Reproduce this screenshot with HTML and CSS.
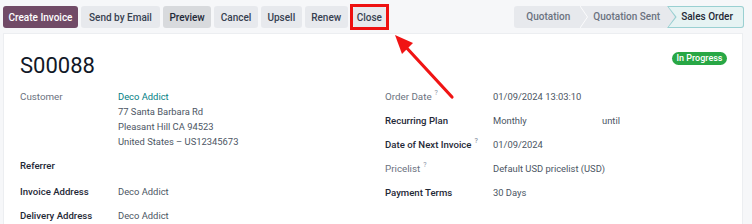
FILE: index.html
```html
<!DOCTYPE html>
<html>
<head>
<meta charset="utf-8">
<link rel="stylesheet" href="styles.css">
</head>
<body>
<div class="page">
  <div class="cp">
    <div class="actions">
      <button class="btn primary">Create Invoice</button>
      <button class="btn wide">Send by Email</button>
      <button class="btn dark">Preview</button>
      <button class="btn">Cancel</button>
      <button class="btn">Upsell</button>
      <button class="btn">Renew</button>
      <span class="hl"><button class="btn">Close</button></span>
    </div>
    <div class="status">
      <span class="st first">Quotation</span>
      <svg class="sep" width="8" height="22" viewBox="0 0 8 22"><polyline points="0,0 7.5,11 0,22" fill="none" stroke="#fbfbfc" stroke-width="1"/></svg>
      <span class="st second">Quotation Sent</span>
      <span class="st active"><span class="in">Sales Order</span></span>
    </div>
  </div>
  <div class="sheet">
    <div class="head">
      <h1 class="title">S00088</h1>
      <span class="badge">In Progress</span>
    </div>
    <div class="groups">
      <div class="group">
        <div class="row">
          <div class="lbl muted">Customer</div>
          <div class="val">
            <div class="link">Deco Addict</div>
            <div>77 Santa Barbara Rd</div>
            <div>Pleasant Hill CA 94523</div>
            <div>United States – US12345673</div>
          </div>
        </div>
        <div class="row ref">
          <div class="lbl">Referrer</div>
          <div class="val"></div>
        </div>
        <div class="row">
          <div class="lbl">Invoice Address</div>
          <div class="val">Deco Addict</div>
        </div>
        <div class="row">
          <div class="lbl">Delivery Address</div>
          <div class="val">Deco Addict</div>
        </div>
      </div>
      <div class="group right">
        <div class="row">
          <div class="lbl muted">Order Date<sup>?</sup></div>
          <div class="val">01/09/2024 13:03:10</div>
        </div>
        <div class="row">
          <div class="lbl">Recurring Plan</div>
          <div class="val split"><span class="plan">Monthly</span><span>until</span></div>
        </div>
        <div class="row">
          <div class="lbl">Date of Next Invoice<sup>?</sup></div>
          <div class="val">01/09/2024</div>
        </div>
        <div class="row">
          <div class="lbl muted">Pricelist<sup>?</sup></div>
          <div class="val">Default USD pricelist (USD)</div>
        </div>
        <div class="row">
          <div class="lbl">Payment Terms</div>
          <div class="val">30 Days</div>
        </div>
      </div>
    </div>
  </div>
  <svg class="arrow" width="752" height="224" viewBox="0 0 752 224">
    <line x1="452" y1="97" x2="404" y2="45" stroke="#f01414" stroke-width="3.2" stroke-linecap="round"/>
    <polygon points="395,35 413,43 402,54" fill="#f01414"/>
  </svg>
</div>
</body>
</html>
```
FILE: styles.css
```css
* { box-sizing: border-box; }
html, body { margin: 0; padding: 0; }
body {
  width: 752px;
  height: 224px;
  overflow: hidden;
  background: #f6f7f9;
  font-family: "Roboto", "Open Sans", sans-serif;
  font-size: 9.4px;
  color: #374151;
}
.page { position: relative; height: 224px; }
.cp {
  display: flex;
  justify-content: space-between;
  align-items: center;
  height: 33px;
  padding: 1px 8px 0 3px;
}
.actions { display: flex; gap: 3px; align-items: center; }
.btn {
  display: block;
  height: 22px;
  padding: 0 6.5px;
  border: 0;
  border-radius: 3px;
  background: #e7e9ed;
  color: #374151;
  font-family: inherit;
  font-size: 10px;
  font-weight: 500;
}
.btn.primary { background: #714b67; color: #fff; padding: 0 5.5px; }
.btn.wide { padding: 0 8px; }
.btn.dark { background: #d8dadd; color: #1f2937; }
.hl { display: block; border: 3px solid #ee1111; margin-left: -1px; }
.hl .btn { height: 20px; border-radius: 2px; padding: 0 4px; }
.status {
  display: flex;
  align-items: stretch;
  height: 22px;
  background: #e7e9ed;
  border-radius: 3px;
  color: #6b7280;
  font-weight: 500;
  font-size: 10px;
}
.st { line-height: 22px; }
.st.first { padding: 0 10px 0 12px; }
.st.second { padding: 0 7px 0 5px; }
.sep { display: block; }
.st.active {
  padding: 1px 1px 1px 1.6px;
  background: #9ad0d2;
  border-radius: 0 3px 3px 0;
  clip-path: polygon(0 0, 100% 0, 100% 100%, 0 100%, 8px 50%);
  line-height: 20px;
}
.st.active .in {
  display: block;
  height: 20px;
  padding: 0 10px 0 12.5px;
  background: #e6f3f3;
  border-radius: 0 2px 2px 0;
  clip-path: polygon(0 0, 100% 0, 100% 100%, 0 100%, 8px 50%);
  color: #1f2937;
}
.sheet {
  margin: 0 9px 0 3px;
  height: 191px;
  background: #fff;
  border: 1px solid #eceef1;
  border-bottom: 0;
  padding: 0 15px 0 16px;
}
.head {
  display: flex;
  justify-content: space-between;
  align-items: flex-start;
  padding-top: 16px;
}
.title {
  margin: 0;
  font-size: 22px;
  line-height: 32px;
  font-weight: 400;
  color: #111827;
}
.badge {
  margin-top: 2px;
  height: 13px;
  line-height: 13px;
  padding: 0 4.5px;
  border-radius: 7px;
  background: #28a745;
  color: #fff;
  font-size: 9px;
  font-weight: 500;
}
.groups {
  display: grid;
  grid-template-columns: 365px 1fr;
  margin-top: 7px;
}
.row { display: flex; line-height: 15px; padding-bottom: 9px; }
.row.ref { padding-bottom: 11px; min-height: 26px; }
.lbl { width: 98px; flex: none; color: #1f2937; font-weight: 500; font-size: 9.6px; }
.right .lbl { width: 108px; }
.lbl.muted { color: #6b7280; font-weight: 400; font-size: 9.8px; }
.lbl sup { font-size: 7px; color: #8a94a6; margin-left: 3px; vertical-align: 5px; line-height: 0; }
.val { color: #4b5563; }
.link { color: #017e84; }
.split { display: flex; }
.plan { width: 109px; }
.arrow { position: absolute; left: 0; top: 0; pointer-events: none; }
```
